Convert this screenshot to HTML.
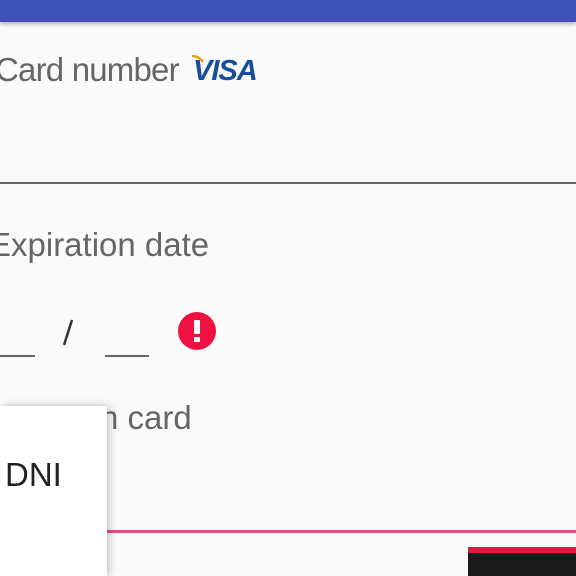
<!DOCTYPE html>
<html><head><style>
html,body{margin:0;padding:0;}
body{width:576px;height:576px;overflow:hidden;background:#fafafa;position:relative;font-family:"Liberation Sans",sans-serif;}
.top{position:absolute;left:0;top:0;width:576px;height:22px;background:#3f51b5;box-shadow:0 2px 4px rgba(0,0,0,.3);}
.t{position:absolute;font-size:33px;color:#666;white-space:nowrap;line-height:1;}
.visa{position:absolute;left:193px;top:55px;font:italic bold 29px "Liberation Sans",sans-serif;color:#1a4d9c;letter-spacing:-1px;}
.ln{position:absolute;background:#666;}
.err{position:absolute;left:178px;top:312px;width:38px;height:38px;border-radius:50%;background:#ee1040;}
.pop{position:absolute;left:0;top:406px;width:107px;height:170px;background:#fff;box-shadow:2px 0 8px rgba(0,0,0,.25);}
</style></head><body>
<div class="top"></div>
<div class="t" style="left:-5px;top:53px;letter-spacing:-0.8px;">Card number</div>
<div class="visa">VISA</div>
<svg style="position:absolute;left:191px;top:55px" width="14" height="8"><path d="M1 1 Q8 1 12 7" stroke="#e8a317" stroke-width="2.5" fill="none"/></svg>
<div class="ln" style="left:0;top:182px;width:576px;height:2px;"></div>
<div class="t" style="left:-11px;top:228px;">Expiration date</div>
<div class="ln" style="left:0;top:355px;width:35px;height:2px;"></div>
<div class="ln" style="left:105px;top:355px;width:44px;height:2px;"></div>
<svg style="position:absolute;left:60px;top:318px" width="16" height="30"><path d="M12 2 L4 27" stroke="#333" stroke-width="2.5"/></svg>
<div class="err"><div style="position:absolute;left:16px;top:8px;width:6px;height:14px;background:#fff;border-radius:1px"></div><div style="position:absolute;left:16px;top:25px;width:6px;height:5px;background:#fff"></div></div>
<div class="t" style="left:100px;top:401px;">n card</div>
<div style="position:absolute;left:100px;top:530px;width:476px;height:3px;background:#de5282;"></div>
<div style="position:absolute;left:468px;top:547px;width:108px;height:29px;background:#1a1a1a;border-top:6px solid #ea1440;box-sizing:border-box;"></div>
<div class="pop"><div class="t" style="left:5px;top:52px;color:#222;">DNI</div></div>
</body></html>
